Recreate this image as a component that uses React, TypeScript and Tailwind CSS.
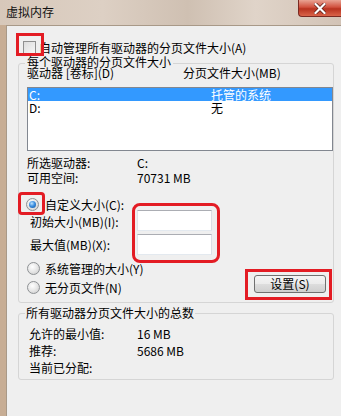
import React from "react";

const font = { fontFamily: '"Noto Sans CJK SC", "Noto Sans", sans-serif' };

function Radio({ checked }: { checked?: boolean }) {
  return (
    <div className="w-[13px] h-[13px] rounded-full border border-[#8e9194] bg-[radial-gradient(circle_at_40%_35%,#ffffff_0%,#e9e9e9_45%,#c9c9c9_100%)] flex items-center justify-center shrink-0">
      {checked && (
        <div className="w-[7px] h-[7px] rounded-full bg-[radial-gradient(circle_at_40%_35%,#bfe4ff_0%,#3d8fe0_45%,#0b4f9a_100%)]" />
      )}
    </div>
  );
}

export default function App() {
  return (
    <div
      className="relative w-[341px] h-[416px] overflow-hidden flex flex-col bg-[linear-gradient(90deg,#c7ad94,#cdb49c)] text-[12px] text-black"
      style={font}
    >
      {/* Title bar */}
      <div className="h-[25px] shrink-0 flex justify-between bg-[linear-gradient(90deg,#d7c8ba_0%,#ddd0c4_30%,#cfc0b2_55%,#e0d4c9_75%,#d2c3b6_100%)]">
        <div className="pl-[6px] leading-[24px] text-[12px] text-[#111]">虚拟内存</div>
        <div className="w-[43px] h-[17px] rounded-bl-[4px] border border-t-0 border-r-0 border-[#7a2a22] bg-[linear-gradient(180deg,#e9a393_0%,#d1513e_45%,#b8321f_55%,#d9644a_100%)] flex items-center justify-center">
          <svg width="12" height="11" viewBox="0 0 12 11">
            <path d="M1.5 1 L10.5 10 M10.5 1 L1.5 10" stroke="#5a1a12" strokeWidth="3.6" strokeLinecap="square" />
            <path d="M1.5 1 L10.5 10 M10.5 1 L1.5 10" stroke="#ffffff" strokeWidth="2.2" strokeLinecap="square" />
          </svg>
        </div>
      </div>

      {/* Body */}
      <div className="flex-1 ml-[6px] bg-[#efefef] border-l border-t border-[#a89988] flex flex-col">
        {/* Auto manage checkbox */}
        <div className="flex items-center pt-[15px] pl-[16px] h-[28px]">
          <div className="w-[13px] h-[13px] border border-[#8f8f8f] bg-[linear-gradient(135deg,#dcdcdc,#f6f6f6)] shrink-0" />
          <span className="ml-[3px] leading-[13px]">自动管理所有驱动器的分页文件大小(A)</span>
        </div>

        {/* Group 1 */}
        <div className="mt-[9px] ml-[11px] w-[316px] border border-[#d5d5d5] rounded-[3px] flex flex-col pb-[8px]">
          <div className="-mt-[8px] ml-[6px] px-[2px] w-fit h-[12px] leading-[12px] bg-[#efefef]">每个驱动器的分页文件大小</div>
          <div className="-mt-[1px] pl-[8px] h-[12px] leading-[12px] flex">
            <span className="w-[156px]">驱动器 [卷标](D)</span>
            <span>分页文件大小(MB)</span>
          </div>
          <div className="mt-[8px] ml-[8px] h-[64px] border border-[#828790] bg-white flex flex-col">
            <div className="h-[13px] leading-[13px] bg-[#3399ff] text-white flex">
              <span className="w-[183px] pl-[1px]">C:</span>
              <span>托管的系统</span>
            </div>
            <div className="h-[13px] leading-[13px] flex">
              <span className="w-[183px] pl-[1px]">D:</span>
              <span>无</span>
            </div>
          </div>
          <div className="mt-[4px] pl-[8px] flex flex-col">
            <div className="h-[15px] leading-[15px] flex">
              <span className="w-[110px]">所选驱动器:</span>
              <span>C:</span>
            </div>
            <div className="h-[15px] leading-[15px] flex">
              <span className="w-[110px]">可用空间:</span>
              <span>70731 MB</span>
            </div>
          </div>
          <div className="mt-[13px] ml-[7px] h-[13px] flex items-center">
            <Radio checked />
            <span className="ml-[6px] leading-[13px]">自定义大小(C):</span>
          </div>
          <div className="-mt-[1px] pl-[11px] grid grid-cols-[107px_75px] gap-y-[3px]">
            <div className="h-[21px] leading-[21px] pt-[1px]">初始大小(MB)(I):</div>
            <div className="h-[21px] bg-white border border-[#abadb3] border-l-[#e2e3ea] border-r-[#dbdfe6] border-b-[#e3e9ef]" />
            <div className="h-[21px] leading-[21px]">最大值(MB)(X):</div>
            <div className="h-[21px] bg-white border border-[#abadb3] border-l-[#e2e3ea] border-r-[#dbdfe6] border-b-[#e3e9ef]" />
          </div>
          <div className="mt-[7px] flex justify-between items-end">
            <div className="ml-[8px] flex flex-col gap-[6px]">
              <div className="h-[13px] flex items-center">
                <Radio />
                <span className="ml-[5px] leading-[13px]">系统管理的大小(Y)</span>
              </div>
              <div className="h-[13px] flex items-center">
                <Radio />
                <span className="ml-[5px] leading-[13px]">无分页文件(N)</span>
              </div>
            </div>
            <div className="mr-[7px] mb-[1px] w-[72px] h-[18px] rounded-[3px] border border-[#707070] bg-[linear-gradient(180deg,#f4f4f4_0%,#ebebeb_50%,#dddddd_51%,#cfcfcf_100%)] flex items-center justify-center leading-[16px]">
              设置(S)
            </div>
          </div>
        </div>

        {/* Group 2 */}
        <div className="mt-[10px] ml-[11px] w-[316px] border border-[#d5d5d5] rounded-[3px] flex flex-col pb-[3px]">
          <div className="-mt-[7px] ml-[6px] px-[1px] w-fit h-[12px] leading-[12px] bg-[#efefef]">所有驱动器分页文件大小的总数</div>
          <div className="mt-[6px] pl-[10px] flex flex-col">
            <div className="h-[17px] leading-[17px] flex">
              <span className="w-[108px]">允许的最小值:</span>
              <span>16 MB</span>
            </div>
            <div className="h-[17px] leading-[17px] flex">
              <span className="w-[108px]">推荐:</span>
              <span>5686 MB</span>
            </div>
            <div className="h-[17px] leading-[17px] flex">
              <span className="w-[108px]">当前已分配:</span>
              <span></span>
            </div>
          </div>
        </div>
      </div>

      {/* Red annotation boxes */}
      <div className="absolute left-[16px] top-[33px] w-[28px] h-[23px] border-[3px] border-[#e31c24]" />
      <div className="absolute left-[18px] top-[192px] w-[27px] h-[23px] border-[3px] border-[#e31c24] rounded-[4px]" />
      <div className="absolute left-[132px] top-[203px] w-[88px] h-[60px] border-[3px] border-[#e31c24] rounded-[8px]" />
      <div className="absolute left-[245px] top-[269px] w-[87px] h-[31px] border-[3px] border-[#e31c24]" />
    </div>
  );
}
